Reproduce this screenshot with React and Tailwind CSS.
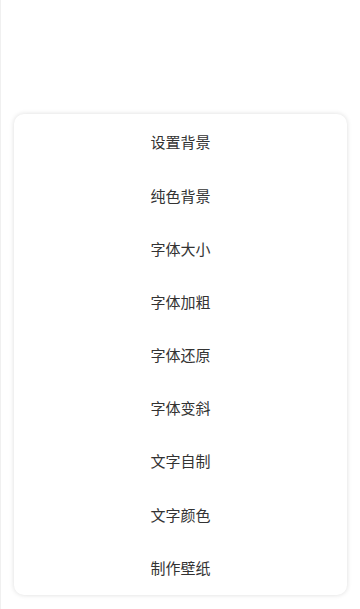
const ITEMS = ['设置背景', '纯色背景', '字体大小', '字体加粗', '字体还原', '字体变斜', '文字自制', '文字颜色', '制作壁纸']

export default function App() {
  return (
    <div
      className="flex h-[609px] w-[360px] flex-col border-l border-[#f0f0f0] bg-white"
      style={{ fontFamily: '"Noto Sans CJK SC", "Noto Sans", sans-serif' }}
    >
      <div className="h-[114px]" />
      <div className="mx-[13px] flex flex-col rounded-[10px] bg-white py-[1px] shadow-[0_0_5px_rgba(0,0,0,0.14)]">
        {ITEMS.map((t) => (
          <div key={t} className="flex h-[53.2px] items-center justify-center pt-[2px] text-[15px] text-[#333]">
            {t}
          </div>
        ))}
      </div>
    </div>
  )
}
